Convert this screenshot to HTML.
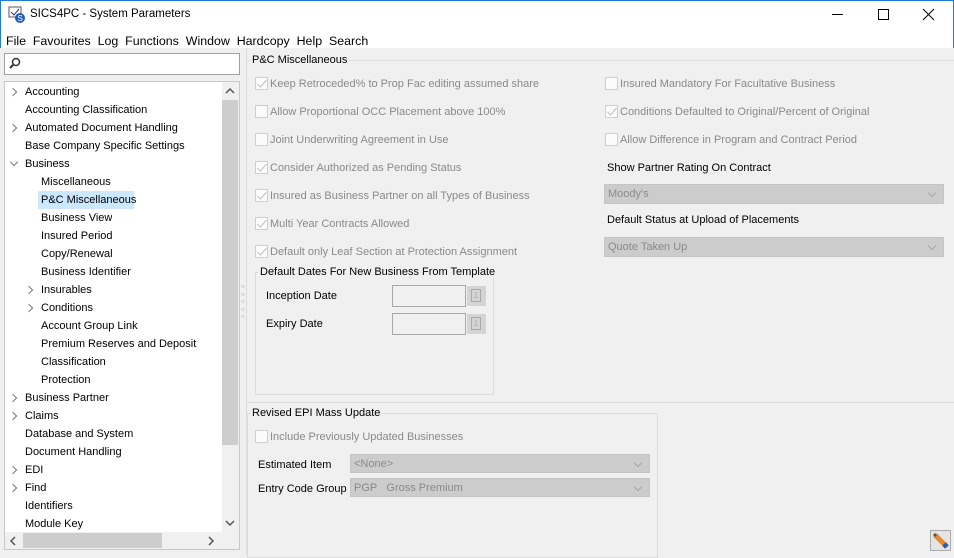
<!DOCTYPE html>
<html><head><meta charset="utf-8"><style>
*{box-sizing:border-box;margin:0;padding:0}
body{width:954px;height:554px;overflow:hidden;background:#f0f0f0;font-family:"Liberation Sans",Arial,sans-serif;font-size:11px;color:#000;position:relative}
.a{position:absolute;white-space:nowrap}
.dis{color:#8a8a8a}
.cb{position:absolute;width:13px;height:13px;border:1px solid #cfcfcf;background:#fbfbfb}
.cb svg{position:absolute;left:0px;top:0px}
.dd{position:absolute;background:#cccccc;border:1px solid #c4c4c4;color:#8a8a8a;padding:3px 3px;font-size:11px}
.dd:after{content:"";position:absolute;right:8px;top:5px;width:5px;height:5px;border-right:1px solid #a8a8a8;border-bottom:1px solid #a8a8a8;transform:rotate(45deg)}
.gb{position:absolute;border:1px solid #dcdcdc}
.gl{position:absolute;background:#f0f0f0;padding:0 2px}
.tr{position:absolute;left:0;height:18px;line-height:20px;font-size:11px}
.chev{position:absolute;width:6px;height:6px;border-right:1.5px solid #777;border-top:1.5px solid #777;transform:rotate(45deg)}
</style></head><body>
<div class="a" style="left:0;top:0;width:954px;height:48px;background:#fff;border:1px solid #1a7fd4;border-bottom:none"></div>
<svg class="a" style="left:8px;top:6px" width="18" height="18" viewBox="0 0 18 18"><rect x="1" y="1" width="12" height="10" fill="#fff" stroke="#556" /><path d="M3 6l3 3 5-6" stroke="#337" fill="none"/><circle cx="12" cy="12" r="5" fill="#1e5fb5"/><text x="9.5" y="15" font-size="8" fill="#fff" font-family="Liberation Sans">S</text></svg>
<div class="a" style="left:30px;top:8px;font-size:11.5px">SICS4PC - System Parameters</div>
<div class="a" style="left:832px;top:14px;width:11px;height:1px;background:#000"></div>
<div class="a" style="left:878px;top:9px;width:11px;height:11px;border:1px solid #000"></div>
<svg class="a" style="left:922px;top:8px" width="13" height="13"><path d="M1 1L12 12M12 1L1 12" stroke="#000"/></svg>
<div class="a" style="left:6px;top:34px;font-size:12.4px">File&nbsp; Favourites&nbsp; Log&nbsp; Functions&nbsp; Window&nbsp; Hardcopy&nbsp; Help&nbsp; Search</div>

<div class="a" style="left:4px;top:53px;width:236px;height:22px;background:#fff;border:1px solid #a0a0a0"></div>
<svg class="a" style="left:8px;top:57px" width="14" height="14"><circle cx="8" cy="5" r="3.5" stroke="#333" stroke-width="1.5" fill="none"/><path d="M5.5 7.5L2 11" stroke="#333" stroke-width="2"/></svg>
<div class="a" style="left:4px;top:81px;width:236px;height:469px;background:#fff;border:1px solid #c8c8c8"></div>
<div class="a" style="left:222px;top:82px;width:17px;height:450px;background:#f0f0f0"></div>
<div class="a" style="left:222px;top:100px;width:16px;height:345px;background:#cdcdcd"></div>
<svg class="a" style="left:224px;top:86px" width="12" height="10"><path d="M2 7l4-4 4 4" stroke="#555" stroke-width="1.5" fill="none"/></svg>
<svg class="a" style="left:224px;top:518px" width="12" height="10"><path d="M2 3l4 4 4-4" stroke="#555" stroke-width="1.5" fill="none"/></svg>
<div class="a" style="left:5px;top:532px;width:234px;height:17px;background:#f0f0f0"></div>
<div class="a" style="left:23px;top:533px;width:139px;height:15px;background:#cdcdcd"></div>
<svg class="a" style="left:8px;top:535px" width="10" height="12"><path d="M7 2L3 6l4 4" stroke="#555" stroke-width="1.5" fill="none"/></svg>
<svg class="a" style="left:206px;top:535px" width="10" height="12"><path d="M3 2l4 4-4 4" stroke="#555" stroke-width="1.5" fill="none"/></svg>
<div class="a" style="left:38px;top:191px;width:96px;height:18px;background:#cce8ff"></div>
<div id="tree"></div>

<div class="a" style="left:246px;top:48px;width:1px;height:506px;background:#dcdcdc"></div>
<div class="a" style="left:241px;top:284px;width:5px;height:38px;font-size:6px;line-height:7.5px;color:#999">○<br>○<br>○<br>○<br>○</div>
<div class="gb" style="left:246px;top:60px;width:708px;height:343px;border-right:none"></div>
<div class="gl" style="left:250px;top:54px">P&amp;C Miscellaneous</div>

<div class="gb" style="left:255px;top:272px;width:239px;height:123px"></div>
<div class="gl" style="left:258px;top:266px">Default Dates For New Business From Template</div>
<div class="a" style="left:266px;top:290px">Inception Date</div>
<div class="a" style="left:266px;top:318px">Expiry Date</div>
<div class="a" style="left:392px;top:285px;width:74px;height:22px;border:1px solid #a8a8a8;background:#f0f0f0"></div>
<div class="a" style="left:392px;top:313px;width:74px;height:22px;border:1px solid #a8a8a8;background:#f0f0f0"></div>
<div class="a" style="left:467px;top:286px;width:19px;height:20px;background:#d4d4d4"><div style="position:absolute;left:4px;top:3px;width:10px;height:13px;border:1px solid #aaa;font-size:8px;color:#aaa;text-align:center;line-height:12px">1</div></div>
<div class="a" style="left:467px;top:314px;width:19px;height:20px;background:#d4d4d4"><div style="position:absolute;left:4px;top:3px;width:10px;height:13px;border:1px solid #aaa;font-size:8px;color:#aaa;text-align:center;line-height:12px">1</div></div>

<div class="gb" style="left:247px;top:413px;width:411px;height:145px"></div>
<div class="gl" style="left:250px;top:407px">Revised EPI Mass Update</div>
<div class="cb" style="left:255px;top:430px"></div>
<div class="a dis" style="left:270px;top:431px">Include Previously Updated Businesses</div>
<div class="a" style="left:258px;top:459px">Estimated Item</div>
<div class="a" style="left:258px;top:483px">Entry Code Group</div>
<div class="dd" style="left:350px;top:454px;width:300px;height:19px">&lt;None&gt;</div>
<div class="dd" style="left:350px;top:478px;width:300px;height:19px">PGP&nbsp;&nbsp;&nbsp;Gross Premium</div>

<div class="a" style="left:607px;top:162px">Show Partner Rating On Contract</div>
<div class="dd" style="left:604px;top:184px;width:340px;height:20px">Moody's</div>
<div class="a" style="left:607px;top:214px">Default Status at Upload of Placements</div>
<div class="dd" style="left:604px;top:237px;width:340px;height:20px">Quote Taken Up</div>

<div id="cbs"></div>
<div class="a" style="left:930px;top:530px;width:21px;height:21px;border:1px solid #aaa;background:#e4e4e4"></div>
<svg class="a" style="left:932px;top:532px" width="18" height="18"><path d="M3 3l11 11" stroke="#e8882a" stroke-width="5"/><path d="M12 12l3 3" stroke="#2a5db0" stroke-width="5"/><path d="M2 2l2 2" stroke="#555" stroke-width="3"/></svg>

<script>
var t=[["Accounting",0,1],["Accounting Classification",0,0],["Automated Document Handling",0,1],["Base Company Specific Settings",0,0],["Business",0,2],["Miscellaneous",1,0],["P&C Miscellaneous",1,0],["Business View",1,0],["Insured Period",1,0],["Copy/Renewal",1,0],["Business Identifier",1,0],["Insurables",1,1],["Conditions",1,1],["Account Group Link",1,0],["Premium Reserves and Deposit Calcul",1,0],["Classification",1,0],["Protection",1,0],["Business Partner",0,1],["Claims",0,1],["Database and System",0,0],["Document Handling",0,0],["EDI",0,1],["Find",0,1],["Identifiers",0,0],["Module Key",0,0]];
var h="";t.forEach(function(r,i){var y=82+i*18,x=r[1]?41:25;
h+='<div class="tr" style="top:'+y+'px;left:'+x+'px;max-width:'+(221-x)+'px;overflow:hidden">'+r[0].replace("&","&amp;")+'</div>';
if(r[2]==1)h+='<div class="chev" style="left:'+(x-15)+'px;top:'+(y+7)+'px"></div>';
if(r[2]==2)h+='<div class="chev" style="left:'+(x-14)+'px;top:'+(y+5)+'px;transform:rotate(135deg)"></div>';});
document.getElementById("tree").innerHTML=h;
var c=[[255,77,1,"Keep Retroceded% to Prop Fac editing assumed share"],[255,105,0,"Allow Proportional OCC Placement above 100%"],[255,133,0,"Joint Underwriting Agreement in Use"],[255,161,1,"Consider Authorized as Pending Status"],[255,189,1,"Insured as Business Partner on all Types of Business"],[255,217,1,"Multi Year Contracts Allowed"],[255,245,1,"Default only Leaf Section at Protection Assignment"],[605,77,0,"Insured Mandatory For Facultative Business"],[605,105,1,"Conditions Defaulted to Original/Percent of Original"],[605,133,0,"Allow Difference in Program and Contract Period"]];
h="";c.forEach(function(r){h+='<div class="cb" style="left:'+r[0]+'px;top:'+r[1]+'px">'+(r[2]?'<svg width="11" height="11"><path d="M1.5 6l3 3 6-7" stroke="#c0c0c0" fill="none"/></svg>':'')+'</div><div class="a dis" style="left:'+(r[0]+15)+'px;top:'+(r[1]+1)+'px">'+r[3]+'</div>';});
document.getElementById("cbs").innerHTML=h;
</script>
</body></html>
